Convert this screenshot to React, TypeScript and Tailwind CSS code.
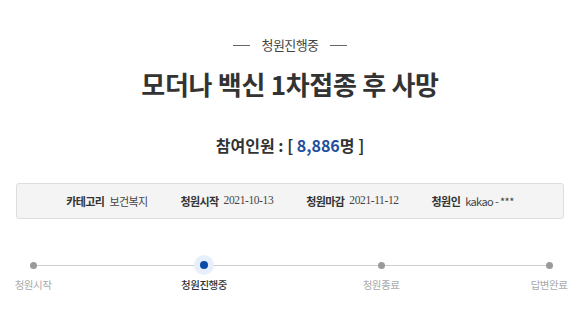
import type React from "react"

const sans = { fontFamily: '"Noto Sans CJK KR", "Noto Sans", sans-serif' }

const steps = [
  { label: "청원시작", active: false, gap: "" },
  { label: "청원진행중", active: true, gap: "ml-[137px]" },
  { label: "청원종료", active: false, gap: "ml-[143px]" },
  { label: "답변완료", active: false, gap: "ml-[134px]" },
]

const InfoItem: React.FC<{ label: string; value: string; serif?: boolean }> = ({ label, value, serif }) => (
  <div className="flex items-center gap-[5px] whitespace-nowrap">
    <span className="text-[11px] font-bold text-[#333] tracking-[-0.6px]">{label}</span>
    {serif ? (
      <span className="text-[11.5px] text-[#444] tracking-[-0.4px]" style={{ fontFamily: '"Liberation Serif", serif' }}>
        {value}
      </span>
    ) : (
      <span className="text-[11px] text-[#444] tracking-[-0.6px]">{value}</span>
    )}
  </div>
)

export default function App() {
  return (
    <div className="w-[580px] h-[333px] bg-white overflow-hidden" style={sans}>
      <div className="flex flex-col items-center pt-[37px]">
        <div className="flex items-center gap-3 h-4">
          <span className="w-[17px] h-px bg-[#666]" />
          <span className="text-[13px] leading-4 text-[#444] tracking-[-0.6px]">청원진행중</span>
          <span className="w-[17px] h-px bg-[#666]" />
        </div>
        <h1 className="mt-[14px] text-[26px] leading-[34px] font-bold text-[#333] tracking-[-0.3px]">
          모더나 백신 1차접종 후 사망
        </h1>
        <div className="mt-[33px] text-[16px] leading-[22px] font-bold text-[#333] whitespace-nowrap">
          참여인원 : [ <span className="text-[#1f4f9e]">8,886</span>명 ]
        </div>
      </div>

      <div className="mx-[16px] mt-[27px] h-[36px] rounded-[3px] border border-[#ddd] bg-[#f4f4f4] flex items-center justify-center gap-[33px]">
        <InfoItem label="카테고리" value="보건복지" />
        <InfoItem label="청원시작" value="2021-10-13" serif />
        <InfoItem label="청원마감" value="2021-11-12" serif />
        <InfoItem label="청원인" value="kakao - ***" />
      </div>

      <div className="relative mx-[16px] mt-[36px]">
        <div className="absolute left-[17px] right-[17px] top-[10px] h-px bg-[#ccc]" />
        <div className="relative flex">
          {steps.map((s) => (
            <div key={s.label} className={`w-[34px] flex flex-col items-center ${s.gap}`}>
              <div className="h-5 w-5 flex items-center justify-center">
                {s.active ? (
                  <div className="h-5 w-5 rounded-full bg-[#e6effb] flex items-center justify-center">
                    <div className="h-[8px] w-[8px] rounded-full bg-[#0b4ba8]" />
                  </div>
                ) : (
                  <div className="h-[7px] w-[7px] rounded-full bg-[#9a9a9a]" />
                )}
              </div>
              <div
                className={
                  s.active
                    ? "mt-[3px] text-[10.5px] leading-[14px] whitespace-nowrap font-medium text-[#333] tracking-[-0.5px]"
                    : "mt-[3px] text-[10.5px] leading-[14px] whitespace-nowrap text-[#aaa] tracking-[-0.5px]"
                }
              >
                {s.label}
              </div>
            </div>
          ))}
        </div>
      </div>
    </div>
  )
}
